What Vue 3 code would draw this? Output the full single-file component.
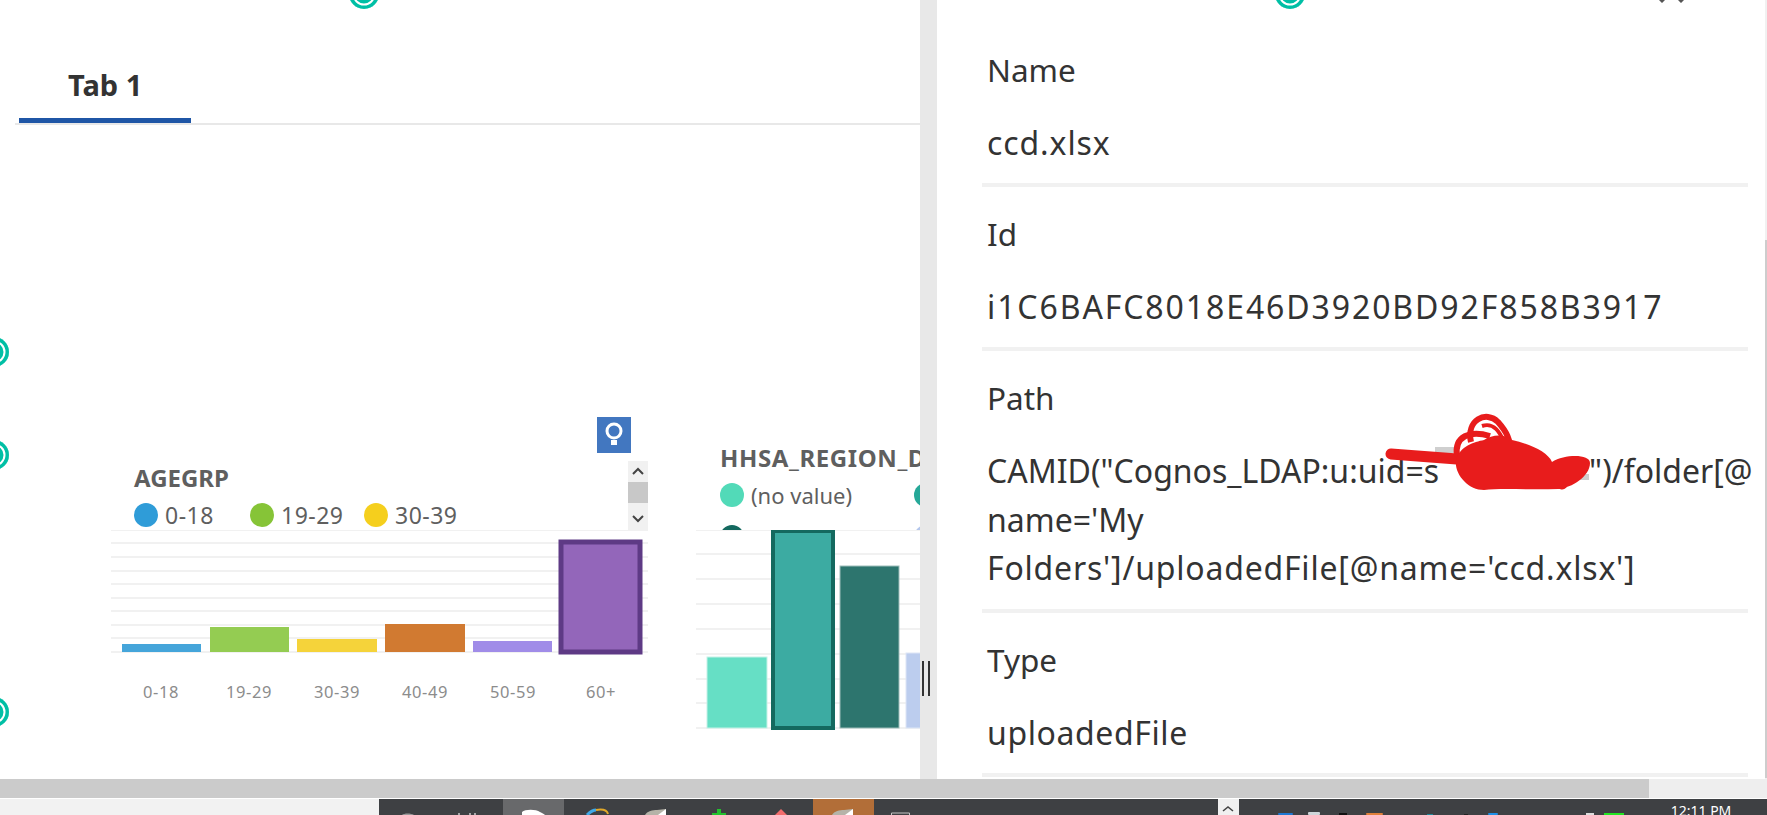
<script setup>
const ageLegend = [
  { label: '0-18', color: '#2f9cd8', width: 116 },
  { label: '19-29', color: '#86c437', width: 114 },
  { label: '30-39', color: '#f5cf1d', width: 90 }
]
const ageGrid = [530, 543, 557, 571, 584, 598, 611, 625, 638, 652]
const ageBars = [
  { x: 122, y: 644, w: 79, h: 8, fill: '#45a5da' },
  { x: 210, y: 627, w: 79, h: 25, fill: '#94cc52' },
  { x: 297, y: 639, w: 80, h: 13, fill: '#f5d33a' },
  { x: 385, y: 624, w: 80, h: 28, fill: '#d17a31' },
  { x: 473, y: 641, w: 79, h: 11, fill: '#a08ce8' }
]
const ageLabels = ['0-18', '19-29', '30-39', '40-49', '50-59', '60+']
const regionGrid = [530, 554, 579, 604, 629, 654, 679, 703, 728]
const regionBars = [
  { x: 707, y: 657, w: 60, h: 71, fill: '#66dfc5', stroke: '#c5f2e7' },
  { x: 840, y: 566, w: 59, h: 162, fill: '#2d756e', stroke: '#9dbdb9' },
  { x: 906, y: 653, w: 30, h: 75, fill: '#bccdee', stroke: '#dde6f6' }
]
const fields = [
  { name: 'Name', value: 'ccd.xlsx', spacing: 0.9 },
  { name: 'Id', value: 'i1C6BAFC8018E46D3920BD92F858B3917', spacing: 1.9 },
  { name: 'Path', value: null },
  { name: 'Type', value: 'uploadedFile', spacing: 0.6 }
]
const pins = [
  { x: 349, y: -21 }, { x: -21, y: 337 }, { x: -21, y: 440 }, { x: -21, y: 697 }
]
</script>

<template>
  <div class="screen">
    <main class="workspace">
      <section class="dashboard">
        <nav class="tabs">
          <div class="tab">Tab 1</div>
        </nav>

        <span v-for="(p, i) in pins" :key="i" class="pin" :style="{ left: p.x + 'px', top: p.y + 'px' }"></span>

        <button class="bulb" aria-label="Insights">
          <svg width="34" height="36" viewBox="0 0 34 36">
            <circle cx="17" cy="14" r="7" fill="none" stroke="#fff" stroke-width="3" />
            <rect x="14" y="23" width="6" height="5" fill="#fff" />
          </svg>
        </button>

        <article class="widget age">
          <div class="legend">
            <h3 class="title">AGEGRP</h3>
            <ul class="legend-row">
              <li v-for="l in ageLegend" :key="l.label" class="legend-item age-item" :style="{ width: l.width + 'px' }">
                <i class="dot" :style="{ background: l.color }"></i>{{ l.label }}
              </li>
            </ul>
            <div class="mini-scroll">
              <svg width="20" height="21" viewBox="0 0 20 21"><path d="M5 13l5-5 5 5" fill="none" stroke="#444" stroke-width="2" /></svg>
              <span class="mini-thumb"></span>
              <svg width="20" height="27" viewBox="0 0 20 27"><path d="M5 13l5 5 5-5" fill="none" stroke="#444" stroke-width="2" /></svg>
            </div>
          </div>
          <svg class="plot" width="537" height="126" viewBox="111 530 537 126">
            <rect v-for="g in ageGrid" :key="g" x="111" :y="g - 1" width="537" height="2" fill="#f1f1f1" />
            <rect v-for="b in ageBars" :key="b.x" :x="b.x" :y="b.y" :width="b.w" :height="b.h" :fill="b.fill" />
            <rect x="561" y="542" width="79" height="110" fill="#9366ba" stroke="#5e3a85" stroke-width="5" />
          </svg>
          <div class="axis">
            <span v-for="a in ageLabels" :key="a">{{ a }}</span>
          </div>
        </article>

        <article class="widget region">
          <div class="legend legend-clip">
            <h3 class="title wide">HHSA_REGION_DESCRIPTION</h3>
            <ul class="legend-grid">
              <li class="legend-item"><i class="dot" style="background:#52dab8"></i>(no value)</li>
              <li class="legend-item"><i class="dot" style="background:#26a898"></i>Central</li>
              <li class="legend-item"><i class="dot" style="background:#14695f"></i>East</li>
              <li class="legend-item"><i class="dot" style="background:#b3c6ec"></i>North</li>
            </ul>
          </div>
          <svg class="plot" width="224" height="205" viewBox="696 530 224 205">
            <rect v-for="g in regionGrid" :key="g" x="696" :y="g - 1" width="224" height="2" fill="#f1f1f1" />
            <rect v-for="b in regionBars" :key="b.x" :x="b.x" :y="b.y" :width="b.w" :height="b.h" :fill="b.fill" :stroke="b.stroke" />
            <rect x="773" y="531" width="60" height="197" fill="#3caba2" stroke="#14695f" stroke-width="4" />
          </svg>
        </article>
      </section>

      <div class="splitter"><span class="grip"></span></div>

      <aside class="props">
        <svg class="top-icon" width="30" height="3" viewBox="0 0 30 3">
          <path d="M0 0h6l-3 3zM19 0h6l-3 3z" fill="#555" />
        </svg>
        <span class="pin" style="left:338px;top:-21px"></span>

        <div v-for="f in fields" :key="f.name" class="field">
          <div class="field-name">{{ f.name }}</div>
          <div v-if="f.value" class="field-value" :style="{ letterSpacing: f.spacing + 'px' }">{{ f.value }}</div>
          <div v-else class="field-value path">
            <div>CAMID("Cognos_LDAP:u:uid=s<span class="redacted"></span>")/folder[@</div>
            <div>name='My</div>
            <div class="path-end">Folders']/uploadedFile[@name='ccd.xlsx']</div>
          </div>
        </div>

        <svg class="scribble" width="230" height="90" viewBox="1375 410 230 90">
          <path d="M1435 450h22M1573 477h16" stroke="#888" stroke-width="6" opacity=".4" fill="none" />
          <path d="M1391 454L1470 460 1562 484" fill="none" stroke="#e81c1c" stroke-width="11" stroke-linecap="round" />
          <path d="M1457 456C1454 436 1470 430 1490 436" fill="none" stroke="#e81c1c" stroke-width="6" />
          <path d="M1471 442C1466 420 1486 410 1498 422 1506 431 1511 440 1509 448" fill="none" stroke="#e81c1c" stroke-width="6" />
          <path d="M1482 426c12-4 18 6 22 16" fill="none" stroke="#e81c1c" stroke-width="4" />
          <path d="M1456 460C1460 446 1474 442 1484 440 1492 434 1506 434 1512 440 1530 444 1548 452 1552 462 1565 454 1590 454 1590 463 1590 476 1572 488 1558 489 1530 490 1500 488 1484 490 1468 490 1454 474 1456 460Z" fill="#e81c1c" />
        </svg>
      </aside>
      <div class="vscroll"><span class="vthumb"></span></div>
    </main>

    <div class="hscroll"><span class="hthumb"></span></div>

    <footer class="taskbar">
      <svg width="1767" height="16" viewBox="0 799 1767 16">
        <rect x="0" y="799" width="379" height="16" fill="#f2f2f2" />
        <rect x="379" y="799" width="1388" height="16" fill="#3e4043" />
        <rect x="503" y="799" width="61" height="16" fill="#68696b" />
        <rect x="813" y="799" width="61" height="16" fill="#b26e38" />
        <rect x="1218" y="799" width="21" height="16" fill="#f0f0f0" />
        <path d="M1223 811l5-4 5 4" fill="none" stroke="#444" stroke-width="1.6" />
        <path d="M402 815c2-2 9-2 12 0z" fill="#9a9a9a" />
        <path d="M459 813v2M470 813v2M475 813v2" stroke="#eee" stroke-width="1.2" />
        <path d="M522 815v-3c3-3 14-3 18 0 2 1 4 2 5 3z" fill="#fff" />
        <path d="M587 815c3-3 6-5 9-5" fill="none" stroke="#3fa9e8" stroke-width="3" />
        <path d="M596 810c6-1 11 0 12 4" fill="none" stroke="#e2a92a" stroke-width="2" />
        <path d="M645 815c2-4 8-5 12-5l9-1v6z" fill="#b5b3a8" />
        <path d="M658 815l8-6v6z" fill="#fff" />
        <path d="M717 809h4v4h5v2h-14v-2h5z" fill="#22c22e" />
        <path d="M775 815l6-6 6 6z" fill="#f26d6d" />
        <path d="M832 815c2-4 8-5 12-5l9-1v6z" fill="#b5b3a8" />
        <path d="M845 815l8-6v6z" fill="#fff" />
        <path d="M891.5 815v-2h18v2" fill="none" stroke="#c5c5c5" />
        <rect x="1278" y="813" width="15" height="2" rx="1" fill="#1e78d4" />
        <rect x="1308" y="812" width="12" height="3" rx="1" fill="#cfd6da" />
        <rect x="1339" y="813" width="8" height="2" fill="#111" />
        <rect x="1366" y="813" width="17" height="2" rx="1" fill="#e0803a" />
        <rect x="1427" y="814" width="6" height="1" fill="#1c8a9c" />
        <rect x="1464" y="814" width="4" height="1" fill="#222" />
        <rect x="1488" y="813" width="10" height="2" rx="1" fill="#1e90e8" />
        <rect x="1586" y="813" width="8" height="2" fill="#ddd" />
        <rect x="1604" y="813" width="20" height="2" fill="#22e622" />
        <text x="1701" y="816" text-anchor="middle" fill="#fff" font-size="14" font-family="'Noto Sans', sans-serif">12:11 PM</text>
      </svg>
    </footer>
  </div>
</template>

<style>
html, body { margin: 0; background: #fff; overflow: hidden; }
</style>

<style scoped>
.screen {
  width: 1767px;
  height: 815px;
  display: flex;
  flex-direction: column;
  overflow: hidden;
  font-family: "Noto Sans", "Open Sans", sans-serif;
  color: #333;
  background: #fff;
}
.workspace { display: flex; height: 779px; flex: none; }
.dashboard {
  width: 920px;
  flex: none;
  position: relative;
  overflow: hidden;
}
.tabs {
  margin-left: 15px;
  padding: 61px 0 0 4px;
  height: 62px;
  box-sizing: content-box;
  border-bottom: 2px solid #e8e8e8;
}
.tab {
  width: 172px;
  height: 62px;
  border-bottom: 5px solid #1f56a6;
  padding-left: 49px;
  box-sizing: border-box;
  font-size: 29px;
  line-height: 48px;
  font-weight: 700;
  color: #333;
}
.pin {
  position: absolute;
  width: 30px;
  height: 30px;
  border-radius: 50%;
  background: #00bfa5;
  box-shadow: inset 0 0 0 3.5px #00bfa5, inset 0 0 0 5.5px #fff;
}
.bulb {
  position: absolute;
  left: 597px;
  top: 417px;
  width: 34px;
  height: 36px;
  padding: 0;
  border: 0;
  background: #4277c0;
  display: block;
}
.bulb svg { display: block; }
.widget { position: absolute; }
.age { left: 111px; top: 461px; width: 537px; }
.region { left: 696px; top: 440px; width: 224px; overflow: hidden; }
.legend { position: relative; height: 69px; padding-left: 23px; box-sizing: border-box; }
.legend-clip { height: 90px; padding-left: 24px; overflow: hidden; }
.title {
  margin: 0;
  height: 33px;
  font-size: 24px;
  line-height: 34px;
  font-weight: 700;
  color: #5f5f5f;
  white-space: nowrap;
}
.wide { line-height: 36px; height: 36px; letter-spacing: .6px; }
.legend-row { list-style: none; margin: 0; padding: 0; display: flex; }
.legend-item {
  display: flex;
  align-items: center;
  gap: 7px;
  font-size: 22px;
  line-height: 42px;
  height: 42px;
  color: #5f5f5f;
  white-space: nowrap;
  flex: none;
}
.age-item { font-size: 23px; letter-spacing: .5px; }
.legend-grid {
  list-style: none;
  margin: -2px 0 0;
  padding: 0;
  display: grid;
  grid-template-columns: 194px 100px;
  width: 300px;
  grid-auto-rows: 42px;
}
.dot { width: 24px; height: 24px; border-radius: 50%; flex: none; display: block; }
.mini-scroll {
  position: absolute;
  right: 0;
  top: 0;
  width: 20px;
  height: 69px;
  background: #f1f1f1;
  display: flex;
  flex-direction: column;
}
.mini-scroll svg { display: block; flex: none; }
.mini-thumb { display: block; height: 21px; background: #c8c8c8; flex: none; }
.plot { display: block; }
.axis {
  display: grid;
  grid-template-columns: repeat(6, 88px);
  padding-left: 6px;
  margin-top: 25px;
  font-size: 16.5px;
  letter-spacing: .6px;
  line-height: 22px;
  color: #8c8c8c;
  text-align: center;
}
.splitter {
  width: 17px;
  flex: none;
  background: #e8e8e8;
  display: flex;
  justify-content: center;
  align-items: flex-start;
  padding-top: 661px;
  box-sizing: border-box;
}
.grip {
  display: block;
  width: 8px;
  height: 35px;
  box-sizing: border-box;
  border-left: 2.5px solid #333;
  border-right: 2.5px solid #333;
  margin-left: -5px;
}
.props {
  flex: 1;
  position: relative;
  overflow: hidden;
  padding: 46px 17px 0 45px;
  box-sizing: border-box;
}
.top-icon { position: absolute; left: 722px; top: 0; }
.field {
  border-bottom: 4px solid #f1f1f1;
  padding-bottom: 16px;
  margin-bottom: 23px;
  line-height: 48px;
  color: #333;
  white-space: nowrap;
}
.field-name, .field-value { padding-left: 5px; }
.field-name { margin-bottom: 25px; font-size: 31.5px; }
.field-value { font-size: 32px; }
.path div { line-height: 48.5px; }
.path-end { letter-spacing: .8px; }
.redacted { display: inline-block; width: 150px; }
.scribble { position: absolute; left: 438px; top: 410px; pointer-events: none; }
.vscroll { width: 2px; flex: none; background: #f1f1f1; padding-top: 240px; box-sizing: border-box; }
.vthumb { display: block; height: 538px; background: #cdcdcd; }
.hscroll { height: 19px; flex: none; background: #eee; border-bottom: 1px solid #fff; }
.hthumb { display: block; width: 1649px; height: 19px; background: #cbcbcb; }
.taskbar { height: 16px; flex: none; overflow: hidden; }
.taskbar svg { display: block; }
</style>
